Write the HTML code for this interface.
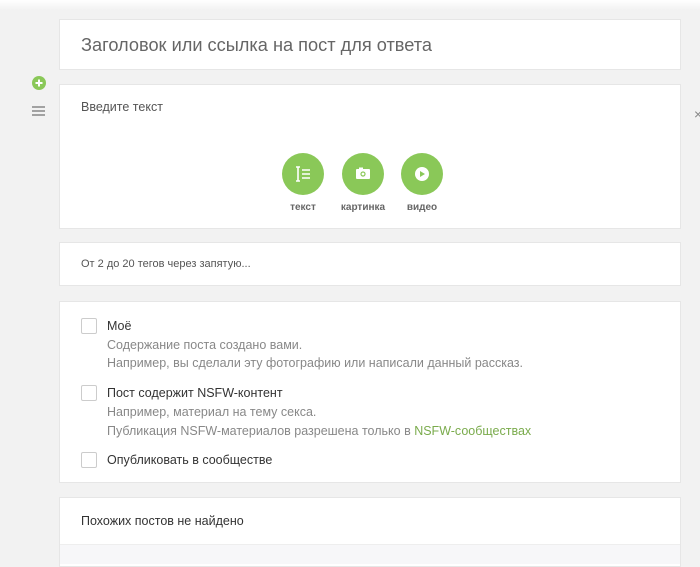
<!DOCTYPE html>
<html><head><meta charset="utf-8"><style>
*{margin:0;padding:0;box-sizing:border-box}
body{width:700px;height:556px;overflow:hidden;background:#f2f2f2;font-family:"Liberation Sans",Arial,sans-serif;position:relative}
.top{position:absolute;left:0;top:0;width:700px;height:10px;background:linear-gradient(#fff,#f2f2f2)}
.card{position:absolute;left:59px;width:622px;background:#fff;border:1px solid #e6e6e6}
.t1{font-size:18.2px;color:#666;position:absolute;left:21px;top:15px}
.btn{position:absolute;top:68px;width:42px;height:42px;border-radius:50%;background:#8ac858}
.lbl{position:absolute;top:117px;font-size:10px;font-weight:bold;color:#666;width:70px;text-align:center}
.cb{position:absolute;left:21px;width:16px;height:16px;border:1px solid #ccc;border-radius:2px}
.txt{position:absolute;left:47px;font-size:12.5px;line-height:18px}
.dk{color:#333}.lt{color:#888}
</style></head><body>
<div class="top"></div>
<div class="card" style="top:19px;height:51px"><div class="t1">Заголовок или ссылка на пост для ответа</div></div>
<svg style="position:absolute;left:32px;top:76px" width="14" height="14"><circle cx="7" cy="7" r="7" fill="#8ac858"/><path d="M7 3.5v7M3.5 7h7" stroke="#fff" stroke-width="2"/></svg>
<svg style="position:absolute;left:32px;top:106px" width="13" height="10"><path d="M0 1h13M0 5h13M0 9h13" stroke="#888" stroke-width="1.4"/></svg>
<div style="position:absolute;left:694px;top:106px;color:#888;font-size:14px">×</div>
<div class="card" style="top:84px;height:145px">
<div style="position:absolute;left:21px;top:15px;font-size:12.5px;color:#555">Введите текст</div>
<div class="btn" style="left:222px"><svg width="42" height="42"><path d="M14 14h4M16 14v14M14 28h4M20 17h8M20 21h8M20 25h8" stroke="#fff" stroke-width="1.6" fill="none"/></svg></div>
<div class="btn" style="left:282px"><svg width="42" height="42"><rect x="14" y="16" width="14" height="10" rx="1" fill="#fff"/><rect x="17" y="14.5" width="4" height="2" fill="#fff"/><circle cx="21" cy="21" r="2.6" fill="#8ac858"/><circle cx="21" cy="21" r="1.4" fill="#fff"/></svg></div>
<div class="btn" style="left:341px"><svg width="42" height="42"><circle cx="21" cy="21" r="7" fill="#fff"/><path d="M19 18v6l5-3z" fill="#8ac858"/></svg></div>
<div class="lbl" style="left:208px">текст</div>
<div class="lbl" style="left:268px">картинка</div>
<div class="lbl" style="left:327px">видео</div>
</div>
<div class="card" style="top:242px;height:44px"><div style="position:absolute;left:21px;top:15px;font-size:11px;color:#555">От 2 до 20 тегов через запятую...</div></div>
<div class="card" style="top:301px;height:182px">
<div class="cb" style="top:16px"></div>
<div class="txt dk" style="top:15px">Моё</div>
<div class="txt lt" style="top:34px">Содержание поста создано вами.</div>
<div class="txt lt" style="top:52px">Например, вы сделали эту фотографию или написали данный рассказ.</div>
<div class="cb" style="top:83px"></div>
<div class="txt dk" style="top:82px">Пост содержит NSFW-контент</div>
<div class="txt lt" style="top:101px">Например, материал на тему секса.</div>
<div class="txt lt" style="top:120px">Публикация NSFW-материалов разрешена только в <span style="color:#7aab4c">NSFW-сообществах</span></div>
<div class="cb" style="top:150px"></div>
<div class="txt dk" style="top:149px">Опубликовать в сообществе</div>
</div>
<div class="card" style="top:497px;height:70px">
<div style="position:absolute;left:21px;top:16px;font-size:12.5px;color:#333">Похожих постов не найдено</div>
<div style="position:absolute;left:0;top:46px;width:620px;height:20px;background:#f7f7f9;border-top:1px solid #eee"></div>
</div>
</body></html>
